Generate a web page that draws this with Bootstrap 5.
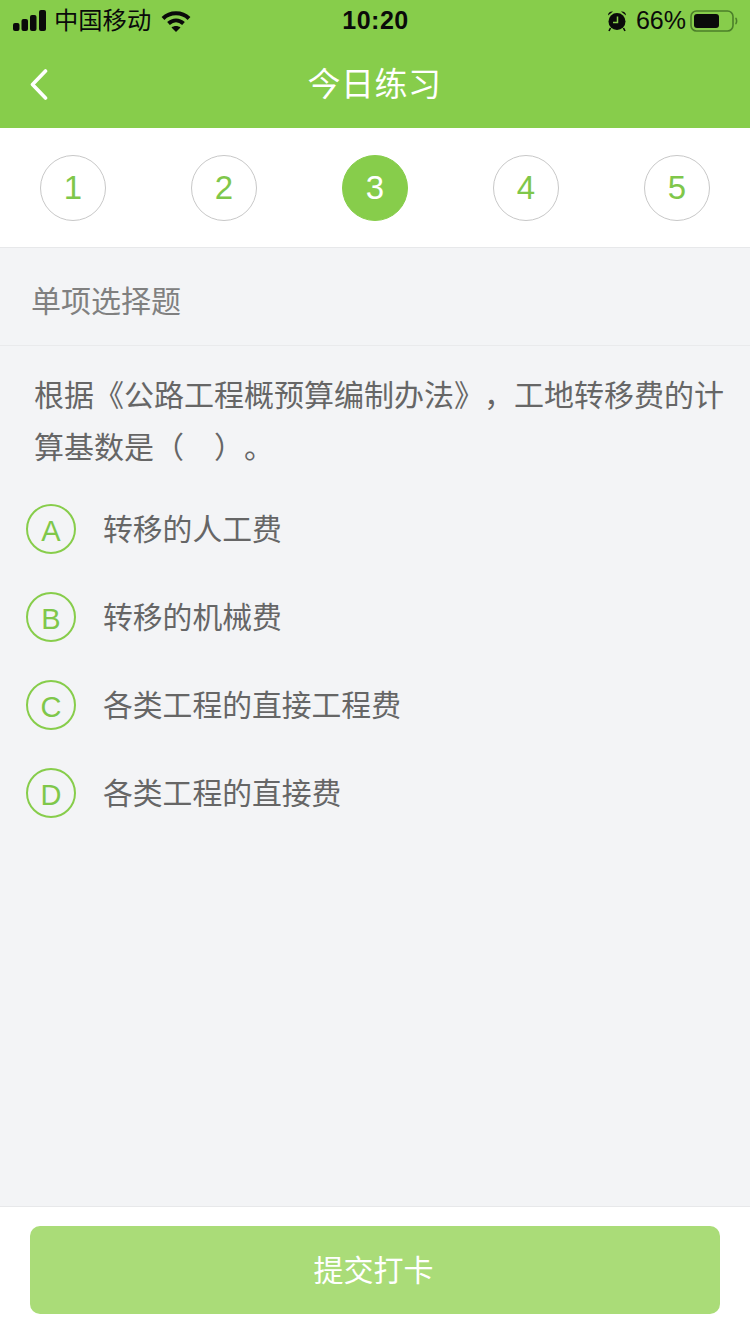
<!DOCTYPE html>
<html lang="zh-CN">

<head>
  <meta charset="UTF-8">
  <meta name="viewport" content="width=device-width, initial-scale=1.0">
  <title>今日练习</title>
  <link href="https://cdn.jsdelivr.net/npm/bootstrap@5.3.0/dist/css/bootstrap.min.css" rel="stylesheet">
  <style>
    html, body {
      height: 100%;
    }

    body {
      font-family: "Liberation Sans", "Noto Sans CJK SC", sans-serif;
      background-color: #f3f4f6;
      color: #666;
      text-spacing-trim: space-all;
    }

    .page-wrap {
      height: 1334px;
    }

    .app-head {
      background-color: #87cd4b;
      height: 128px;
    }

    .status-row {
      height: 40px;
      padding: 2px 12px 0 13px;
      color: #0a0a0a;
      font-size: 25px;
    }

    .status-side {
      width: 300px;
    }

    .status-time {
      font-size: 25px;
      font-weight: 700;
      letter-spacing: 0.5px;
    }

    .status-carrier {
      font-size: 24.3px;
      margin-left: 7px;
      margin-right: 10px;
    }

    .title-row {
      height: 88px;
      padding-top: 2px;
    }

    .back-btn {
      left: 30px;
      top: 29px;
      line-height: 0;
    }

    .page-title {
      color: #fff;
      font-size: 33px;
      letter-spacing: 0.5px;
      margin-right: 1px;
    }

    .step-bar {
      height: 120px;
      padding: 0 40px 0 40px;
      border-bottom: 1px solid #e7e8ea;
    }

    .step-dot {
      width: 66px;
      height: 66px;
      border: 1px solid #c8c8c8;
      color: #7fc74a;
      font-size: 33px;
    }

    .step-dot.active-dot {
      background-color: #87cd4b;
      border-color: #87cd4b;
      color: #fff;
    }

    .type-row {
      height: 98px;
      padding-left: 31px;
      padding-top: 9px;
      border-bottom: 1px solid #e9eaec;
      color: #808080;
      font-size: 30px;
    }

    .question-text {
      padding: 24px 20px 0 34px;
      font-size: 30px;
      line-height: 52px;
      margin: 0;
    }

    .option-list {
      padding: 11px 0 0 26px;
    }

    .option-row {
      height: 88px;
    }

    .option-mark {
      width: 50px;
      height: 50px;
      padding-top: 6px;
      border: 2px solid #87cd4b;
      color: #7fc74a;
      font-size: 29px;
      margin-right: 27px;
    }

    .option-text {
      padding-top: 2px;
      font-size: 29.8px;
      color: #666;
    }

    .foot-bar {
      height: 128px;
      padding: 19px 30px 0;
      border-top: 1px solid #e7e8ea;
    }

    .submit-btn {
      height: 88px;
      padding-right: 15px;
      background-color: #aadc78;
      border: 0;
      border-radius: 10px;
      color: #fff;
      font-size: 30px;
    }

    .submit-btn:disabled {
      background-color: #aadc78;
      color: #fff;
      opacity: 1;
    }
  </style>
</head>

<body>
  <div class="page-wrap d-flex flex-column">
    <div class="app-head flex-shrink-0">
      <div class="status-row d-flex align-items-center justify-content-between">
        <div class="status-side d-flex align-items-center">
          <svg width="34" height="22" viewBox="0 0 34 22" fill="#0a0a0a">
            <rect x="0" y="13" width="6.5" height="8" rx="2"></rect>
            <rect x="8.5" y="9" width="6.5" height="12" rx="2"></rect>
            <rect x="17" y="5" width="6.5" height="16" rx="2"></rect>
            <rect x="26" y="0" width="7" height="21" rx="2"></rect>
          </svg>
          <span class="status-carrier">中国移动</span>
          <svg width="30" height="22" viewBox="0 0 30 22" fill="none" stroke="#0a0a0a" stroke-width="4">
            <path d="M2 8.5 C9 1.5 21 1.5 28 8.5"></path>
            <path d="M7.5 13.5 C12 9.5 18 9.5 22.5 13.5"></path>
            <path d="M15 22 L10.5 17.5 C13 15.5 17 15.5 19.5 17.5 Z" fill="#0a0a0a" stroke="none"></path>
          </svg>
        </div>
        <span class="status-time">10:20</span>
        <div class="status-side d-flex align-items-center justify-content-end">
          <svg class="me-2" width="22" height="22" viewBox="0 0 22 22">
            <circle cx="11" cy="11.5" r="8.5" fill="#0a0a0a"></circle>
            <path d="M2 5.5 C2 2.5 4.5 1 7 1.5 Z M20 5.5 C20 2.5 17.5 1 15 1.5 Z" fill="#0a0a0a"></path>
            <path d="M4.5 18 L3 21 M17.5 18 L19 21" stroke="#0a0a0a" stroke-width="1.6"></path>
            <path d="M11.5 6.5 V12.5 H7" fill="none" stroke="#87cd4b" stroke-width="1.5"></path>
          </svg>
          <span>66%</span>
          <svg class="ms-1" width="48" height="22" viewBox="0 0 48 22">
            <rect x="1" y="1" width="42" height="20" rx="5.5" fill="none" stroke="#4c7f2a" stroke-width="1.6"></rect>
            <rect x="4" y="4" width="25" height="14" rx="3" fill="#0a0a0a"></rect>
            <path d="M45.5 8 C47 9 47 13 45.5 14" fill="none" stroke="#4c7f2a" stroke-width="1.6"></path>
          </svg>
        </div>
      </div>
      <div class="title-row d-flex align-items-center justify-content-center position-relative">
        <a class="back-btn position-absolute" href="#" aria-label="返回">
          <svg width="18" height="31" viewBox="0 0 18 31" fill="none" stroke="#fff" stroke-width="3.6" stroke-linecap="round" stroke-linejoin="round">
            <path d="M15.5 2 L2.5 15.5 L15.5 29"></path>
          </svg>
        </a>
        <span class="page-title">今日练习</span>
      </div>
    </div>

    <div class="step-bar bg-white d-flex align-items-center justify-content-between flex-shrink-0" id="stepBar"></div>

    <div class="flex-grow-1">
      <div class="type-row d-flex align-items-center">单项选择题</div>
      <p class="question-text">根据《公路工程概预算编制办法》，工地转移费的计算基数是（　）。</p>
      <div class="option-list" id="optionList"></div>
    </div>

    <div class="foot-bar bg-white flex-shrink-0">
      <button class="submit-btn btn w-100 d-flex align-items-center justify-content-center" type="button" disabled>提交打卡</button>
    </div>
  </div>

  <script src="https://cdn.jsdelivr.net/npm/bootstrap@5.3.0/dist/js/bootstrap.bundle.min.js"></script>
  <script>
    const steps = [1, 2, 3, 4, 5];
    const options = [
      { key: "A", text: "转移的人工费" },
      { key: "B", text: "转移的机械费" },
      { key: "C", text: "各类工程的直接工程费" },
      { key: "D", text: "各类工程的直接费" }
    ];

    document.getElementById('stepBar').innerHTML = steps.map(n =>
      `<div class="step-dot rounded-circle d-flex align-items-center justify-content-center ${n === 3 ? 'active-dot' : ''}">${n}</div>`
    ).join('');

    document.getElementById('optionList').innerHTML = options.map(o => `
      <div class="option-row d-flex align-items-center">
        <div class="option-mark rounded-circle d-flex align-items-center justify-content-center">${o.key}</div>
        <span class="option-text">${o.text}</span>
      </div>
    `).join('');
  </script>
</body>

</html>
